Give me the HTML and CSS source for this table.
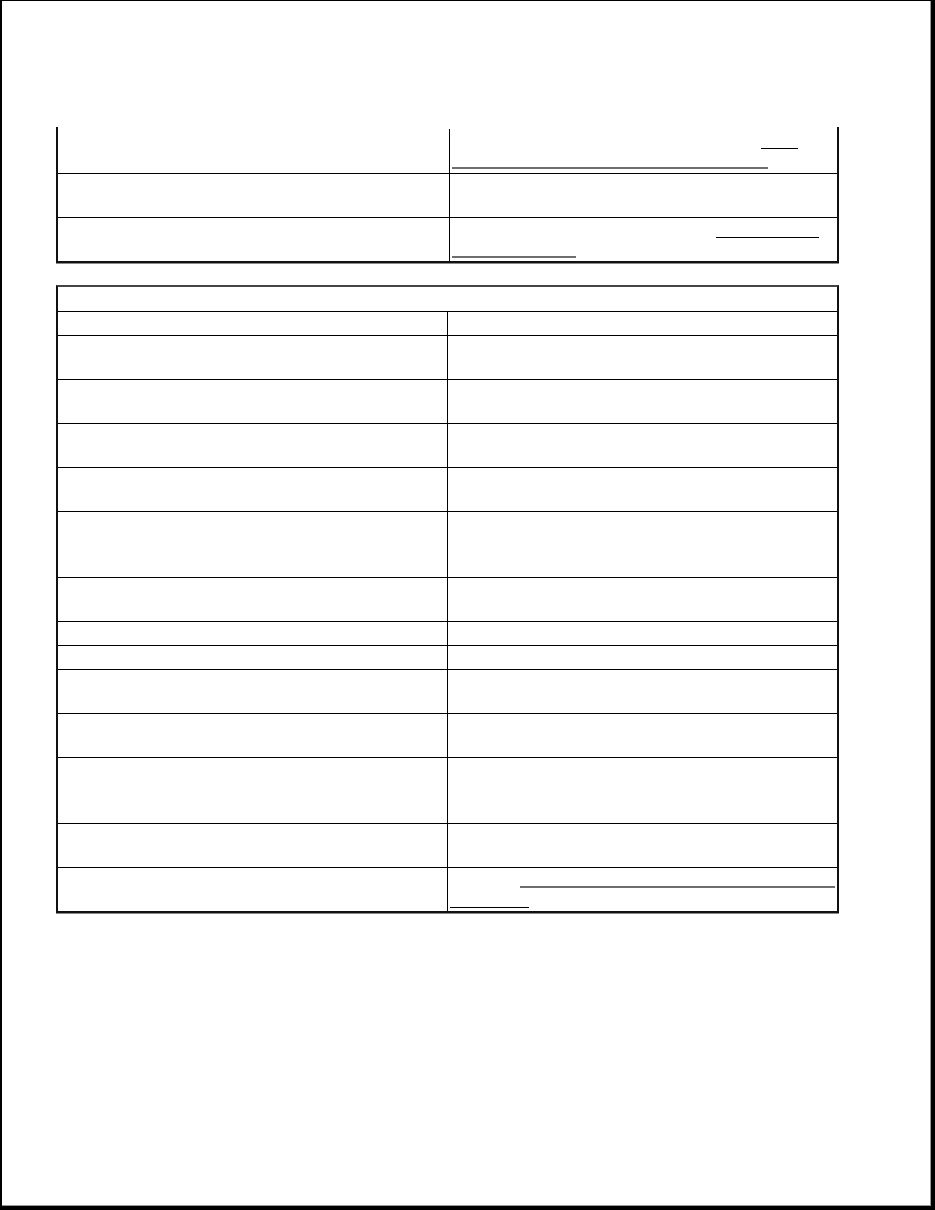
FILE: index.html
```html
<!DOCTYPE html>
<html lang="en">
<head>
<meta charset="utf-8">
<title>Document page</title>
<link rel="stylesheet" href="styles.css">
</head>
<body>
<div class="page">
  <div class="table t1">
    <div class="row r-first">
      <div class="cell left"></div>
      <div class="cell right pad2">
        <div class="line"><span class="ul dark" style="margin-left:311px;width:37px"></span></div>
        <div class="line"><span class="ul gray" style="margin-left:2px;width:316px"></span></div>
      </div>
    </div>
    <div class="row r-mid">
      <div class="cell left"></div>
      <div class="cell right"></div>
    </div>
    <div class="row r-last1">
      <div class="cell left"></div>
      <div class="cell right">
        <div class="line"><span class="ul dark" style="margin-left:266px;width:103px"></span></div>
        <div class="line"><span class="ul gray" style="margin-left:2px;width:124px"></span></div>
      </div>
    </div>
  </div>

  <div class="table t2">
    <div class="head"></div>
    <div class="row h1"><div class="cell left"></div><div class="cell right"></div></div>
    <div class="row h2"><div class="cell left"></div><div class="cell right"></div></div>
    <div class="row h2"><div class="cell left"></div><div class="cell right"></div></div>
    <div class="row h2"><div class="cell left"></div><div class="cell right"></div></div>
    <div class="row h2"><div class="cell left"></div><div class="cell right"></div></div>
    <div class="row h3"><div class="cell left"></div><div class="cell right"></div></div>
    <div class="row h2"><div class="cell left"></div><div class="cell right"></div></div>
    <div class="row h1"><div class="cell left"></div><div class="cell right"></div></div>
    <div class="row h1"><div class="cell left"></div><div class="cell right"></div></div>
    <div class="row h2"><div class="cell left"></div><div class="cell right"></div></div>
    <div class="row h2"><div class="cell left"></div><div class="cell right"></div></div>
    <div class="row h3"><div class="cell left"></div><div class="cell right"></div></div>
    <div class="row h2"><div class="cell left"></div><div class="cell right"></div></div>
    <div class="row last">
      <div class="cell left"></div>
      <div class="cell right">
        <div class="line"><span class="ul gray" style="margin-left:72px;width:315px"></span></div>
        <div class="line"><span class="ul dark" style="margin-left:2px;width:79px"></span></div>
      </div>
    </div>
  </div>
</div>
</body>
</html>
```

FILE: styles.css
```css
html, body {
  margin: 0;
  padding: 0;
  background: #ffffff;
  font-family: "Liberation Sans", Arial, sans-serif;
}

.page {
  box-sizing: border-box;
  width: 935px;
  height: 1210px;
  border-top: 1px solid #000;
  border-left: 2px solid #000;
  border-right: 4px solid #000;
  border-bottom: 4px solid #000;
  box-shadow: inset -1px -1px 0 #9a9a9a;
  padding-top: 126px;
  padding-left: 54px;
  background: #fff;
}

.table {
  box-sizing: border-box;
  width: 783px;
  border-left: 2px solid #111;
  border-right: 2px solid #111;
  border-bottom: 2px solid #111;
  box-shadow: 0 1px 0 #8a8a8a;
}

.t2 {
  margin-top: 22px;
  border-top: 2px solid #444;
}

.row {
  box-sizing: border-box;
  display: grid;
  border-bottom: 1px solid #000;
}

.t1 .row {
  grid-template-columns: 392px 1fr;
}

.t2 .row {
  grid-template-columns: 390px 1fr;
}

.t1 .r-first { height: 47px; }
.t1 .r-mid { height: 44px; }
.t1 .r-last1 { height: 43px; border-bottom: none; }

.head {
  box-sizing: border-box;
  height: 25px;
  border-bottom: 1px solid #000;
}

.t2 .h1 { height: 24px; }
.t2 .h2 { height: 44px; }
.t2 .h3 { height: 66px; }
.t2 .last { height: 43px; border-bottom: none; }

.cell {
  box-sizing: border-box;
  height: 100%;
}

.cell.left {
  border-right: 1px solid #000;
}

.t1 .r-first .cell.left {
  margin-top: 2px;
  height: calc(100% - 2px);
}

.cell.right {
  padding-left: 0;
}

.pad2 {
  padding-top: 2px;
}

.line {
  height: 20px;
  display: flex;
}

.ul {
  display: block;
  box-sizing: border-box;
  height: 20px;
}

.ul.dark {
  border-bottom: 1px solid #000;
}

.ul.gray {
  border-bottom: 2px solid #6e6e6e;
}
```
